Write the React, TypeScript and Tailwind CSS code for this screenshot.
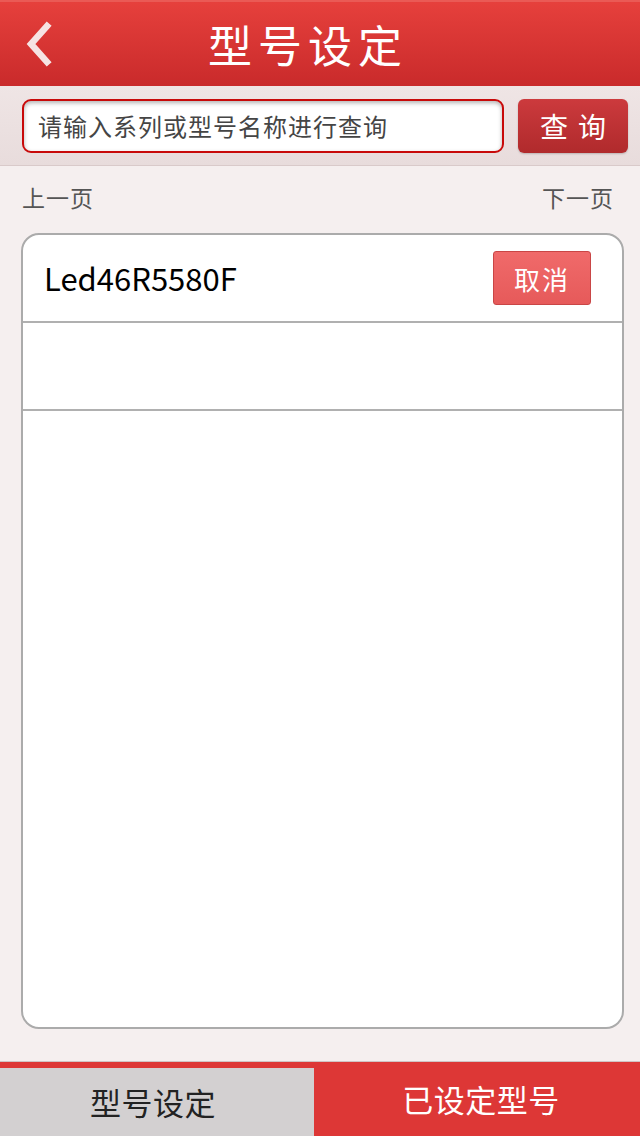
import React from 'react';

const font = { fontFamily: '"Noto Sans CJK SC", "Noto Sans", sans-serif' };

function BackIcon() {
  return (
    <svg width="34" height="46" viewBox="0 0 34 46" fill="none">
      <path d="M25 5 L9 23 L25 41" stroke="#f6e3e3" strokeWidth="6.5" strokeLinecap="square" />
    </svg>
  );
}

export default function App() {
  return (
    <div className="w-[640px] h-[1136px] flex flex-col bg-[#f5efef] overflow-hidden" style={font}>
      {/* header */}
      <div className="h-[86px] shrink-0 flex items-center bg-gradient-to-b from-[#e6403c] to-[#c92a2b] border-t-2 border-[#ea5a55]">
        <button className="w-[88px] pl-[22px] flex items-center">
          <BackIcon />
        </button>
        <h1 className="flex-1 pr-[112px] text-center text-white text-[44px] tracking-[6px] leading-none">型号设定</h1>
      </div>

      {/* search */}
      <div className="h-[80px] shrink-0 flex items-center gap-[14px] pl-[22px] pr-[12px] bg-gradient-to-b from-[#efe5e5] to-[#e8dcdc] border-b border-[#d9caca]">
        <div className="flex-1 h-[54px] rounded-[9px] border-2 border-[#c80a0a] bg-white shadow-[inset_0_2px_4px_rgba(0,0,0,0.3)] flex items-center px-[14px]">
          <span className="text-[24px] tracking-[1px] text-[#454545]">请输入系列或型号名称进行查询</span>
        </div>
        <button className="w-[110px] h-[54px] rounded-[6px] bg-gradient-to-b from-[#cc3a3d] to-[#b02a2c] text-white text-[28px] tracking-[10px] pl-[10px] shadow-[0_1px_2px_rgba(0,0,0,0.2)]">
          查询
        </button>
      </div>

      {/* pager */}
      <div className="flex justify-between pl-[22px] pr-[26px] pt-[14px] pb-[19px] text-[23px] tracking-[1px] text-[#555] leading-[34px]">
        <span>上一页</span>
        <span>下一页</span>
      </div>

      {/* list */}
      <div className="ml-[21px] w-[603px] h-[796px] rounded-[18px] border-2 border-[#ababab] bg-white overflow-hidden">
        <div className="h-[88px] flex items-center justify-between pl-[21px] pr-[31px] border-b-2 border-[#b0b0b0]">
          <span className="text-[31px] text-black">Led46R5580F</span>
          <button className="w-[98px] h-[54px] rounded-[3px] border border-[#c94646] bg-gradient-to-b from-[#f06a6a] to-[#e65a5a] text-white text-[26px] tracking-[2px]">
            取消
          </button>
        </div>
        <div className="h-[88px] border-b-2 border-[#b0b0b0]" />
      </div>

      <div className="flex-1" />

      {/* bottom tabs */}
      <div className="h-[75px] shrink-0 flex bg-[#dd3736] border-t border-[#d0c4c4]">
        <div className="w-[314px] mt-[6px] pr-[8px] bg-[#d3d0d1] flex items-center justify-center text-[31px] tracking-[0.5px] text-[#222]">型号设定</div>
        <div className="flex-1 pl-[8px] flex items-center justify-center text-[31px] tracking-[0.5px] text-white">已设定型号</div>
      </div>
    </div>
  );
}
